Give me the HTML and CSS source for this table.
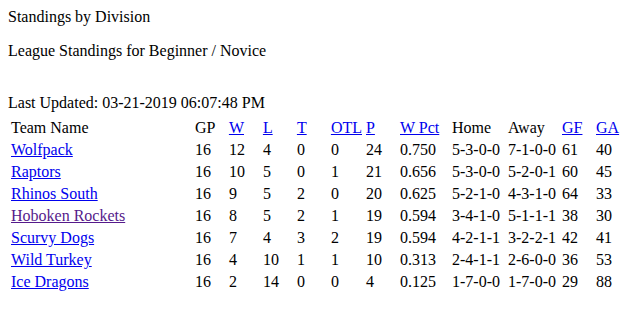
FILE: index.html
```html
<!DOCTYPE html>
<html>
<head>
<meta charset="utf-8">
<link rel="stylesheet" href="styles.css">
</head>
<body>
<div class="title">Standings by Division</div>
<p class="subtitle">League Standings for Beginner / Novice</p>
<div class="updated">Last Updated: 03-21-2019 06:07:48 PM</div>
<table class="standings">
<thead>
<tr>
<th>Team Name</th>
<th class="c30">GP</th>
<th class="c30"><a href="#">W</a></th>
<th class="c30"><a href="#">L</a></th>
<th class="c30"><a href="#">T</a></th>
<th class="c31"><a href="#">OTL</a></th>
<th class="c30"><a href="#">P</a></th>
<th class="c48"><a href="#">W Pct</a></th>
<th class="c52">Home</th>
<th class="c50">Away</th>
<th class="c30"><a href="#">GF</a></th>
<th class="c30"><a href="#">GA</a></th>
</tr>
</thead>
<tbody>
<tr><td><a href="#">Wolfpack</a></td><td>16</td><td>12</td><td>4</td><td>0</td><td>0</td><td>24</td><td>0.750</td><td>5-3-0-0</td><td>7-1-0-0</td><td>61</td><td>40</td></tr>
<tr><td><a href="#">Raptors</a></td><td>16</td><td>10</td><td>5</td><td>0</td><td>1</td><td>21</td><td>0.656</td><td>5-3-0-0</td><td>5-2-0-1</td><td>60</td><td>45</td></tr>
<tr><td><a href="#">Rhinos South</a></td><td>16</td><td>9</td><td>5</td><td>2</td><td>0</td><td>20</td><td>0.625</td><td>5-2-1-0</td><td>4-3-1-0</td><td>64</td><td>33</td></tr>
<tr><td><a href="#" class="visited">Hoboken Rockets</a></td><td>16</td><td>8</td><td>5</td><td>2</td><td>1</td><td>19</td><td>0.594</td><td>3-4-1-0</td><td>5-1-1-1</td><td>38</td><td>30</td></tr>
<tr><td><a href="#">Scurvy Dogs</a></td><td>16</td><td>7</td><td>4</td><td>3</td><td>2</td><td>19</td><td>0.594</td><td>4-2-1-1</td><td>3-2-2-1</td><td>42</td><td>41</td></tr>
<tr><td><a href="#">Wild Turkey</a></td><td>16</td><td>4</td><td>10</td><td>1</td><td>1</td><td>10</td><td>0.313</td><td>2-4-1-1</td><td>2-6-0-0</td><td>36</td><td>53</td></tr>
<tr><td><a href="#">Ice Dragons</a></td><td>16</td><td>2</td><td>14</td><td>0</td><td>0</td><td>4</td><td>0.125</td><td>1-7-0-0</td><td>1-7-0-0</td><td>29</td><td>88</td></tr>
</tbody>
</table>
</body>
</html>
```
FILE: styles.css
```css
html, body {
  background: #ffffff;
}
body {
  margin: 8px;
  font-family: "Liberation Serif", "Times New Roman", serif;
  font-size: 16px;
  color: #000000;
}
.title {
  margin: 0;
}
.subtitle {
  margin: 16px 0 34px 0;
}
.updated {
  margin: 0;
}
.standings {
  width: 100%;
  border-collapse: separate;
  border-spacing: 2px;
  margin-top: 4px;
  font-size: 16px;
}
.standings th,
.standings td {
  padding: 1px;
  text-align: left;
  font-weight: normal;
  vertical-align: middle;
  white-space: nowrap;
}
.standings a {
  color: #0000ee;
  text-decoration: underline;
}
.standings a.visited {
  color: #551a8b;
}
.c30 { width: 30px; }
.c31 { width: 31px; }
.c48 { width: 48px; }
.c50 { width: 50px; }
.c52 { width: 52px; }
```
